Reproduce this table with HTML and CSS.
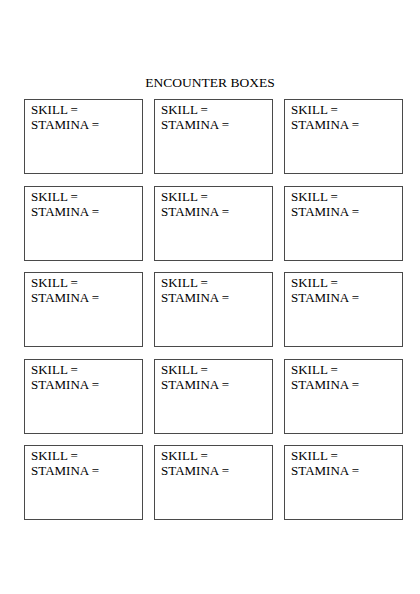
FILE: index.html
```html
<!DOCTYPE html>
<html>
<head>
<meta charset="utf-8">
<link rel="stylesheet" href="styles.css">
</head>
<body>
<div class="page">
  <h1 class="title">ENCOUNTER BOXES</h1>
  <div class="grid">
    <div class="box"><div>SKILL =</div><div>STAMINA =</div></div>
    <div class="box"><div>SKILL =</div><div>STAMINA =</div></div>
    <div class="box"><div>SKILL =</div><div>STAMINA =</div></div>
    <div class="box"><div>SKILL =</div><div>STAMINA =</div></div>
    <div class="box"><div>SKILL =</div><div>STAMINA =</div></div>
    <div class="box"><div>SKILL =</div><div>STAMINA =</div></div>
    <div class="box"><div>SKILL =</div><div>STAMINA =</div></div>
    <div class="box"><div>SKILL =</div><div>STAMINA =</div></div>
    <div class="box"><div>SKILL =</div><div>STAMINA =</div></div>
    <div class="box"><div>SKILL =</div><div>STAMINA =</div></div>
    <div class="box"><div>SKILL =</div><div>STAMINA =</div></div>
    <div class="box"><div>SKILL =</div><div>STAMINA =</div></div>
    <div class="box"><div>SKILL =</div><div>STAMINA =</div></div>
    <div class="box"><div>SKILL =</div><div>STAMINA =</div></div>
    <div class="box"><div>SKILL =</div><div>STAMINA =</div></div>
  </div>
</div>
</body>
</html>
```
FILE: styles.css
```css
html, body {
  margin: 0;
  padding: 0;
  background: #ffffff;
}
body {
  font-family: "Liberation Serif", "Times New Roman", serif;
  color: #000000;
}
.page {
  width: 420px;
  height: 594px;
  padding-top: 75px;
  box-sizing: border-box;
}
.title {
  margin: 0;
  font-size: 13.5px;
  font-weight: normal;
  line-height: 15px;
  height: 24px;
  text-align: center;
}
.grid {
  display: grid;
  grid-template-columns: repeat(3, 119px);
  grid-auto-rows: 75px;
  column-gap: 11px;
  row-gap: 11.5px;
  padding-left: 24px;
}
.box {
  box-sizing: border-box;
  border: 1px solid #4a4a4a;
  padding: 2px 6px 0 6px;
  font-size: 13px;
  line-height: 15px;
}
```
